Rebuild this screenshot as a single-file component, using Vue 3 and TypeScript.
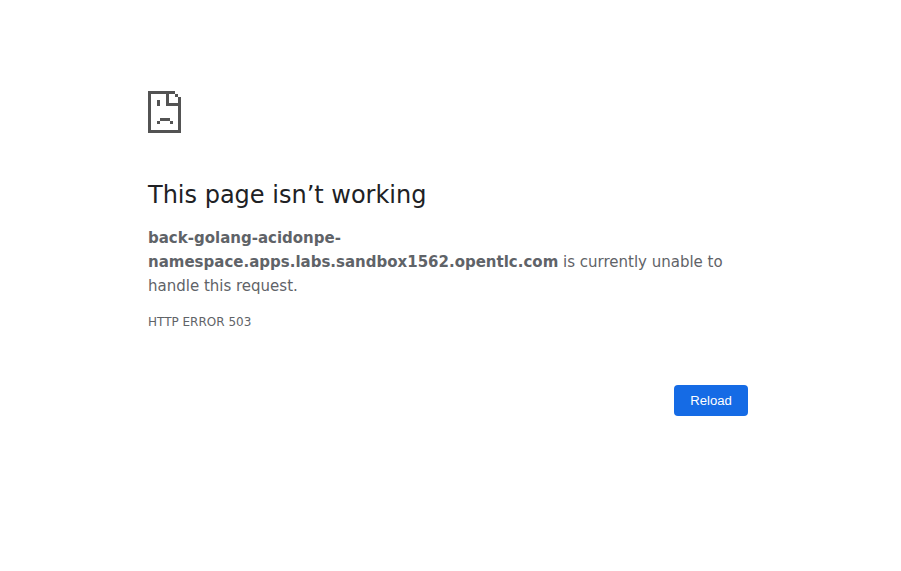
<script setup lang="ts">
const host: string = 'back-golang-acidonpe-namespace.apps.labs.sandbox1562.opentlc.com'
const errorCode: string = 'HTTP ERROR 503'

function reload(): void {
  window.location.reload()
}
</script>

<template>
  <main class="error-page">
    <svg class="icon" width="33" height="42" viewBox="0 0 33 42" shape-rendering="crispEdges" aria-hidden="true">
      <path fill="#535353" d="M0 0H27V3H21V12H33V42H0ZM3 3V39H30V15H18V3Z" fill-rule="evenodd" />
      <path fill="#535353" d="M27 3h3v3h-3zM30 6h3v6h-3zM9 9h3v6H9zM12 27h10v3H12zM9 30h3v3H9zM22 30h3v3h-3z" />
    </svg>
    <h1>This page isn’t working</h1>
    <p class="summary"><strong>{{ host }}</strong> is currently unable to handle this request.</p>
    <div class="code">{{ errorCode }}</div>
    <div class="actions">
      <button type="button" @click="reload">Reload</button>
    </div>
  </main>
</template>

<style scoped>
.error-page {
  box-sizing: border-box;
  width: 600px;
  margin: 0 auto;
  padding-top: 91px;
  color: #5f6368;
  font-family: "DejaVu Sans", sans-serif;
  font-size: 15px;
  line-height: 24px;
}
.icon {
  display: block;
}
h1 {
  margin: 47px 0 16px;
  color: #202124;
  font-size: 24px;
  font-weight: 500;
  line-height: 30px;
}
.summary {
  margin: 0;
}
.code {
  margin-top: 12px;
  font-size: 12px;
  line-height: 24px;
}
.actions {
  display: flex;
  justify-content: flex-end;
  margin-top: 51px;
}
button {
  box-sizing: border-box;
  width: 74px;
  height: 31px;
  padding: 0;
  border: 0;
  border-radius: 4px;
  background: #156be5;
  color: #fff;
  font-family: "Liberation Sans", sans-serif;
  font-size: 13.125px;
}
</style>

<style>
body {
  background: #fff;
  padding-right: 5px;
}
</style>
